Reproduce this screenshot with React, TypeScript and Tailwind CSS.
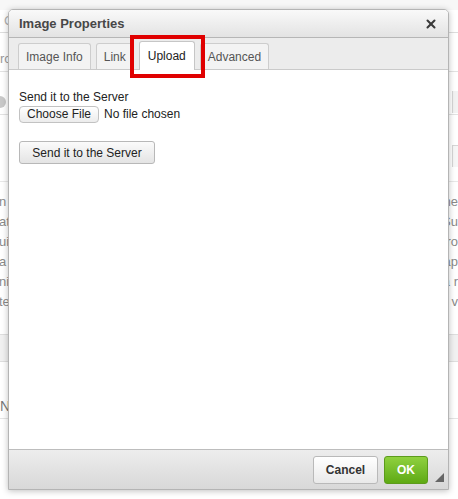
import React from "react";
import { X } from "lucide-react";

const bgRows = [
  ["n i", "me"],
  ["at", "Su"],
  ["ui", "ro"],
  ["a", "ap"],
  ["ni", "a r"],
  ["te", "a v"],
];

const tabs = ["Image Info", "Link", "Upload", "Advanced"];

export default function App() {
  return (
    <div
      className="relative w-[458px] h-[499px] overflow-hidden bg-white"
      style={{ fontFamily: '"Liberation Sans", Arial, sans-serif' }}
    >
      {/* Page behind the dialog */}
      <div className="flex flex-col text-[13px] text-[#8a8a8a]">
        <div className="h-[10px] bg-[#f7f7f7]" />
        <div className="h-[22px] flex items-center px-1 text-[#b0b0b0]">C</div>
        <div className="h-px bg-[#dddddd]" />
        <div className="h-[14px]" />
        <div className="h-[24px] flex items-center justify-between text-[#9a9a9a]">
          <span>rc</span>
          <span />
        </div>
        <div className="h-px bg-[#e2e2e2]" />
        <div className="h-[18px]" />
        <div className="h-[24px] flex items-center justify-between">
          <span className="ml-[-6px] w-[12px] h-[12px] rounded-full bg-[#c8c8c8]" />
          <span className="w-[6px] h-[22px] bg-[#f2f2f2] border-l border-[#d6d6d6]" />
        </div>
        <div className="h-px bg-[#e2e2e2]" />
        <div className="h-[30px]" />
        <div className="flex justify-end">
          <span className="w-[6px] h-[22px] bg-[#f6f6f6] border-l border-t border-[#d6d6d6]" />
        </div>
        <div className="h-[14px]" />
        <div className="h-px bg-[#e8e8e8]" />
        <div className="h-[10px]" />
        <div className="flex flex-col">
          {bgRows.map(([l, r], i) => (
            <div key={i} className="h-[20px] flex items-center justify-between">
              <span className="ml-[-1px]">{l}</span>
              <span>{r}</span>
            </div>
          ))}
        </div>
        <div className="h-[22px]" />
        <div className="h-[28px] bg-[#f1f1f1] border-y border-[#dedede]" />
        <div className="h-[32px]" />
        <div className="h-[24px] flex items-center text-[#777] text-[14px]">N</div>
        <div className="h-px bg-[#e4e4e4]" />
      </div>

      {/* Dialog */}
      <div className="absolute left-[8px] top-[9px] w-[441px] h-[481px] flex flex-col border border-[#b4b4b4] rounded-t-[5px] bg-white shadow-[0_1px_6px_rgba(0,0,0,0.25)] overflow-hidden">
        <div className="h-[28px] shrink-0 flex items-center justify-between pl-[10px] pr-[10px] bg-gradient-to-b from-[#f9f9f9] to-[#e3e3e3] border-b border-[#b6b6b6]">
          <span className="text-[13px] font-bold text-[#474747]">Image Properties</span>
          <X size={14} strokeWidth={3.5} className="text-[#3a3a3a]" />
        </div>

        <div className="h-[32px] shrink-0 flex items-end gap-[5px] pl-[9px] bg-[#ececec] border-b border-[#cacaca]">
          {tabs.map((t) =>
            t === "Upload" ? (
              <div
                key={t}
                className="h-[29px] mb-[-1px] px-[8px] flex items-center bg-white border border-b-0 border-[#c6c6c6] rounded-t-[3px] text-[12px] text-[#222]"
              >
                {t}
              </div>
            ) : (
              <div
                key={t}
                className="h-[26px] px-[7px] flex items-center bg-[#f3f3f3] border border-b-0 border-[#cdcdcd] rounded-t-[3px] text-[12px] text-[#555]"
              >
                {t}
              </div>
            )
          )}
        </div>

        <div className="flex-1 flex flex-col items-start pl-[10px] pt-[20px] text-[12px] text-[#222]">
          <div className="leading-[15px]">Send it to the Server</div>
          <div className="flex items-center gap-[5px]">
            <button className="h-[17px] px-[7px] flex items-center rounded-[4px] border border-[#c2c2c2] bg-gradient-to-b from-white to-[#ececec] text-[12px] text-[#222]">
              Choose File
            </button>
            <span>No file chosen</span>
          </div>
          <button className="mt-[18px] h-[23px] w-[136px] flex items-center justify-center rounded-[3px] border border-[#b8b8b8] bg-gradient-to-b from-[#fbfbfb] to-[#e4e4e4] text-[12px] text-[#222]">
            Send it to the Server
          </button>
        </div>

        <div className="h-[40px] shrink-0 relative flex items-center justify-end gap-[6px] pr-[20px] bg-gradient-to-b from-[#ededed] to-[#d8d8d8] border-t border-[#bdbdbd]">
          <button className="h-[28px] w-[65px] rounded-[3px] border border-[#b9b9b9] bg-gradient-to-b from-white to-[#e9e9e9] text-[12px] font-bold text-[#333]">
            Cancel
          </button>
          <button className="h-[28px] w-[44px] rounded-[3px] border border-[#5c9b1c] bg-gradient-to-b from-[#8fd13e] to-[#5eaa12] text-[12px] font-bold text-white">
            OK
          </button>
          <span className="absolute right-[4px] bottom-[7px] w-0 h-0 border-l-[9px] border-l-transparent border-b-[9px] border-b-[#666]" />
        </div>
      </div>

      {/* Highlight */}
      <div className="absolute left-[130px] top-[35px] w-[75px] h-[43px] border-[4px] border-[#e00000]" />
    </div>
  );
}
